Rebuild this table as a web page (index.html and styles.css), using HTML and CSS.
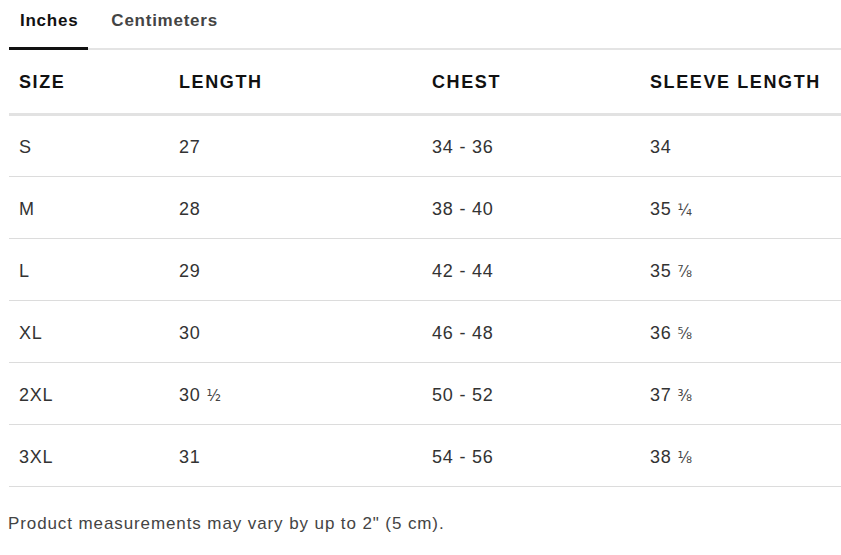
FILE: index.html
```html
<!DOCTYPE html>
<html>
<head>
<meta charset="utf-8">
<link rel="stylesheet" href="styles.css">
</head>
<body>
<div class="chart">
  <div class="tabs">
    <div class="tab active">Inches</div>
    <div class="tab">Centimeters</div>
  </div>
  <table class="sizes">
    <colgroup>
      <col class="c1"><col class="c2"><col class="c3"><col class="c4">
    </colgroup>
    <thead>
      <tr><th>SIZE</th><th>LENGTH</th><th>CHEST</th><th>SLEEVE LENGTH</th></tr>
    </thead>
    <tbody>
      <tr><td>S</td><td>27</td><td>34 - 36</td><td>34</td></tr>
      <tr><td>M</td><td>28</td><td>38 - 40</td><td>35 <span class="fr">¼</span></td></tr>
      <tr><td>L</td><td>29</td><td>42 - 44</td><td>35 <span class="fr">⅞</span></td></tr>
      <tr><td>XL</td><td>30</td><td>46 - 48</td><td>36 <span class="fr">⅝</span></td></tr>
      <tr><td>2XL</td><td>30 <span class="fr">½</span></td><td>50 - 52</td><td>37 <span class="fr">⅜</span></td></tr>
      <tr><td>3XL</td><td>31</td><td>54 - 56</td><td>38 <span class="fr">⅛</span></td></tr>
    </tbody>
  </table>
  <p class="note">Product measurements may vary by up to 2" (5 cm).</p>
</div>
</body>
</html>
```
FILE: styles.css
```css
html, body {
  margin: 0;
  padding: 0;
  background: #fff;
}
body {
  font-family: "Liberation Sans", Arial, sans-serif;
  color: #333;
}
.chart {
  padding-left: 9px;
}
.tabs {
  display: flex;
  gap: 12px;
  height: 48px;
  border-bottom: 2px solid #e4e4e4;
}
.tab {
  padding: 11px 11px 0;
  font-size: 17px;
  font-weight: bold;
  color: #444;
  box-sizing: border-box;
  height: 50px;
  letter-spacing: 0.75px;
}
.tab.active {
  color: #111;
  border-bottom: 3px solid #111;
  margin-bottom: -2px;
  padding-right: 10px;
}
.sizes {
  width: 832px;
  border-collapse: collapse;
  table-layout: fixed;
}
.c1 { width: 160px; }
.c2 { width: 253px; }
.c3 { width: 218px; }
.c4 { width: 201px; }
.sizes th {
  text-align: left;
  font-size: 18px;
  font-weight: bold;
  color: #111;
  height: 64px;
  padding: 3px 0 0 10px;
  border-bottom: 3px solid #e2e2e2;
  letter-spacing: 1.6px;
  box-sizing: border-box;
}
.sizes td {
  font-size: 18px;
  color: #333;
  height: 62px;
  padding: 4px 0 0 10px;
  border-bottom: 1px solid #dcdcdc;
  box-sizing: border-box;
  letter-spacing: 0.8px;
}
.fr {
  font-family: "DejaVu Sans", sans-serif;
  font-size: 15px;
  letter-spacing: 0;
  color: #444;
}
.note {
  margin: 27px 0 0 -1px;
  font-size: 17px;
  color: #444;
  letter-spacing: 0.9px;
}
```
